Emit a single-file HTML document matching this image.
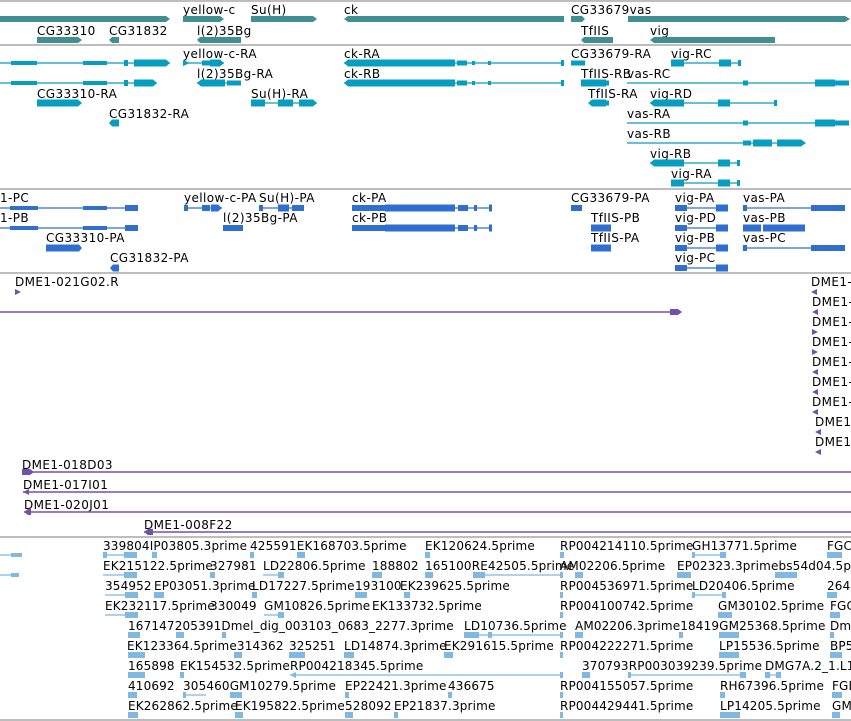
<!DOCTYPE html>
<html><head><meta charset="utf-8"><style>
html,body{margin:0;padding:0;background:#fff;}
svg{display:block;}
text{font-family:"DejaVu Sans","Liberation Sans",sans-serif;font-size:12px;fill:#000;letter-spacing:0.4px;}
.est text{letter-spacing:0.15px;}
.sep{stroke:#bdbdbd;stroke-width:2;}
.g{fill:#3f8f93;}
.t{fill:#069ec0;}
.tl{stroke:#069ec0;stroke-width:1.2;}
.p{fill:#2f6fd0;}
.pl{stroke:#2f6fd0;stroke-width:1.2;}
.u{fill:#7052ad;}
.ul{stroke:#7052ad;stroke-width:1.5;}
.b{fill:#7fb8e0;}
.bl{stroke:#7fb8e0;stroke-width:1.2;}
</style></head><body>
<svg width="851" height="721" viewBox="0 0 851 721" xmlns="http://www.w3.org/2000/svg">
<rect width="851" height="721" fill="#fff"/>
<line class="sep" x1="0" y1="1" x2="851" y2="1"/>
<line class="sep" x1="0" y1="45" x2="851" y2="45"/>
<line class="sep" x1="0" y1="189" x2="851" y2="189"/>
<line class="sep" x1="0" y1="273" x2="851" y2="273"/>
<line class="sep" x1="0" y1="537" x2="851" y2="537"/>
<line class="sep" x1="0" y1="720" x2="851" y2="720"/>

<!-- GENE TRACK -->
<polygon class="g" points="0,16 166,16 170,19 166,22 0,22"/>
<text x="183" y="14">yellow-c</text>
<polygon class="g" points="183,16 220,16 224,19 220,22 183,22"/>
<text x="251" y="14">Su(H)</text>
<polygon class="g" points="251,16 313,16 317,19 313,22 251,22"/>
<text x="344" y="14">ck</text>
<polygon class="g" points="348,16 564,16 564,22 348,22 344,19"/>
<text x="571" y="14">CG33679vas</text>
<polygon class="g" points="571,16 582,16 585,19 582,22 571,22"/>
<polygon class="g" points="628,16 845,16 850,19 845,22 628,22"/>
<text x="37" y="35">CG33310</text>
<polygon class="g" points="37,37 78,37 82,40 78,43 37,43"/>
<text x="109" y="35">CG31832</text>
<polygon class="g" points="112,37 119,37 119,43 112,43 109,40"/>
<text x="197" y="35">l(2)35Bg</text>
<polygon class="g" points="200,37 241,37 241,43 200,43 197,40"/>
<text x="581" y="35">TfIIS</text>
<polygon class="g" points="584,37 613,37 613,43 584,43 581,40"/>
<text x="650" y="35">vig</text>
<polygon class="g" points="654,37 775,37 775,43 654,43 650,40"/>

<!-- TRANSCRIPT TRACK -->
<g>
<line class="tl" x1="0" y1="63" x2="170" y2="63"/>
<rect class="t" x="11" y="61" width="26" height="4"/><rect class="t" x="83" y="61" width="24" height="4"/><rect class="t" x="124" y="60" width="4" height="6"/>
<polygon class="t" points="134,59.5 166,59.5 170,63 166,66.5 134,66.5"/>
<line class="tl" x1="0" y1="83" x2="157" y2="83"/>
<rect class="t" x="11" y="81" width="26" height="4"/><rect class="t" x="83" y="81" width="24" height="4"/><rect class="t" x="124" y="80" width="4" height="6"/>
<polygon class="t" points="134,79.5 153,79.5 157,83 153,86.5 134,86.5"/>
<text x="183" y="58">yellow-c-RA</text>
<line class="tl" x1="183" y1="63" x2="224" y2="63"/>
<polygon class="t" points="183,60 190,63 183,66"/><rect class="t" x="202" y="60.5" width="8" height="5"/>
<polygon class="t" points="210,59.5 220,59.5 224,63 220,66.5 210,66.5"/>
<text x="197" y="78">l(2)35Bg-RA</text>
<line class="tl" x1="197" y1="83" x2="241" y2="83"/>
<polygon class="t" points="201,79.5 225,79.5 225,86.5 201,86.5 197,83"/>
<rect class="t" x="227" y="80.5" width="14" height="5"/>
<text x="37" y="98">CG33310-RA</text>
<polygon class="t" points="37,99.5 78,99.5 82,103 78,106.5 37,106.5"/>
<text x="251" y="98">Su(H)-RA</text>
<line class="tl" x1="251" y1="103" x2="317" y2="103"/>
<rect class="t" x="251" y="99.5" width="14" height="7"/><rect class="t" x="278" y="99.5" width="15" height="7"/>
<polygon class="t" points="299,99.5 313,99.5 317,103 313,106.5 299,106.5"/>
<text x="109" y="118">CG31832-RA</text>
<polygon class="t" points="112,119.5 119,119.5 119,126.5 112,126.5 109,123"/>

<text x="344" y="58">ck-RA</text>
<line class="tl" x1="344" y1="63" x2="563" y2="63"/>
<polygon class="t" points="348,59.5 455,59.5 455,66.5 348,66.5 344,63"/>
<rect class="t" x="457" y="60.5" width="10" height="5"/><rect class="t" x="472" y="61" width="3" height="4"/><rect class="t" x="488" y="61" width="3" height="4"/><rect class="t" x="561" y="60" width="3" height="6"/>
<text x="344" y="78">ck-RB</text>
<line class="tl" x1="344" y1="83" x2="563" y2="83"/>
<polygon class="t" points="348,79.5 455,79.5 455,86.5 348,86.5 344,83"/>
<rect class="t" x="457" y="80.5" width="10" height="5"/><rect class="t" x="472" y="81" width="3" height="4"/><rect class="t" x="488" y="81" width="3" height="4"/><rect class="t" x="561" y="80" width="3" height="6"/>

<text x="571" y="58">CG33679-RA</text>
<rect class="t" x="571" y="60.5" width="14" height="5"/>
<text x="671" y="58">vig-RC</text>
<line class="tl" x1="671" y1="63" x2="741" y2="63"/>
<rect class="t" x="671" y="59.5" width="13" height="7"/><rect class="t" x="719" y="59.5" width="12" height="7"/><rect class="t" x="738" y="60" width="3" height="6"/>

<text x="581" y="78">TfIIS-RB</text>
<rect class="t" x="581" y="79.5" width="25" height="7"/><rect class="t" x="606" y="80.5" width="3" height="5"/>
<text x="627" y="78">vas-RC</text>
<line class="tl" x1="627" y1="83" x2="845" y2="83"/>
<rect class="t" x="743" y="80.5" width="5" height="5"/>
<rect class="t" x="815" y="79.5" width="20" height="7"/><rect class="t" x="835" y="80.5" width="14" height="5"/>

<text x="588" y="98">TfIIS-RA</text>
<polygon class="t" points="592,99.5 606,99.5 606,106.5 592,106.5 588,103"/><rect class="t" x="606" y="100.5" width="3" height="5"/>
<text x="650" y="98">vig-RD</text>
<line class="tl" x1="650" y1="103" x2="777" y2="103"/>
<polygon class="t" points="654,99.5 684,99.5 684,106.5 654,106.5 650,103"/><rect class="t" x="718" y="99.5" width="12" height="7"/><rect class="t" x="774" y="100" width="3" height="6"/>

<text x="627" y="118">vas-RA</text>
<line class="tl" x1="627" y1="123" x2="845" y2="123"/>
<rect class="t" x="743" y="120.5" width="5" height="5"/>
<rect class="t" x="815" y="119.5" width="20" height="7"/><rect class="t" x="835" y="120.5" width="14" height="5"/>

<text x="627" y="138">vas-RB</text>
<line class="tl" x1="627" y1="143" x2="805" y2="143"/>
<rect class="t" x="743" y="140.5" width="8" height="5"/><rect class="t" x="753" y="139.5" width="19" height="7"/>
<polygon class="t" points="777,139.5 801,139.5 806,143 801,146.5 777,146.5"/>

<text x="650" y="158">vig-RB</text>
<line class="tl" x1="650" y1="163" x2="740" y2="163"/>
<polygon class="t" points="654,159.5 684,159.5 684,166.5 654,166.5 650,163"/><rect class="t" x="718" y="159.5" width="12" height="7"/><rect class="t" x="737" y="160" width="3" height="6"/>
<text x="671" y="178">vig-RA</text>
<line class="tl" x1="671" y1="183" x2="740" y2="183"/>
<rect class="t" x="671" y="179.5" width="13" height="7"/><rect class="t" x="718" y="179.5" width="12" height="7"/><rect class="t" x="737" y="180" width="3" height="6"/>
</g>

<!-- PROTEIN TRACK -->
<g>
<text x="0" y="202">1-PC</text>
<line class="pl" x1="0" y1="208" x2="138" y2="208"/>
<rect class="p" x="10" y="206" width="28" height="4"/><rect class="p" x="83" y="206" width="24" height="4"/><rect class="p" x="125" y="205" width="13" height="6"/>
<text x="0" y="222">1-PB</text>
<line class="pl" x1="0" y1="228" x2="138" y2="228"/>
<rect class="p" x="10" y="226" width="28" height="4"/><rect class="p" x="83" y="226" width="24" height="4"/><rect class="p" x="125" y="225" width="13" height="6"/>
<text x="46" y="242">CG33310-PA</text>
<polygon class="p" points="46,244.5 79,244.5 82,248 79,251.5 46,251.5"/>
<text x="110" y="262">CG31832-PA</text>
<polygon class="p" points="113,264.5 119,264.5 119,271.5 113,271.5 110,268"/>
<text x="184" y="202">yellow-c-PA</text>
<line class="pl" x1="184" y1="208" x2="222" y2="208"/>
<rect class="p" x="184" y="205" width="4" height="6"/><rect class="p" x="202" y="205" width="8" height="6"/><polygon class="p" points="211,204.5 218,204.5 222,208 218,211.5 211,211.5"/>
<text x="259" y="202">Su(H)-PA</text>
<line class="pl" x1="259" y1="208" x2="304" y2="208"/>
<rect class="p" x="259" y="205" width="4" height="6"/><rect class="p" x="278" y="204.5" width="11" height="7"/><rect class="p" x="292" y="205" width="12" height="6"/>
<text x="223" y="222">l(2)35Bg-PA</text>
<rect class="p" x="223" y="225" width="20" height="6"/>
<text x="352" y="202">ck-PA</text>
<line class="pl" x1="352" y1="208" x2="492" y2="208"/>
<rect class="p" x="352" y="205" width="100" height="6"/><rect class="p" x="385" y="204.5" width="70" height="7"/><rect class="p" x="458" y="205" width="10" height="6"/><rect class="p" x="474" y="205" width="3" height="6"/><rect class="p" x="489" y="204.5" width="3" height="7"/>
<text x="352" y="222">ck-PB</text>
<line class="pl" x1="352" y1="228" x2="492" y2="228"/>
<rect class="p" x="352" y="225" width="100" height="6"/><rect class="p" x="385" y="224.5" width="70" height="7"/><rect class="p" x="458" y="225" width="10" height="6"/><rect class="p" x="474" y="225" width="3" height="6"/><rect class="p" x="489" y="224.5" width="3" height="7"/>
<text x="571" y="202">CG33679-PA</text>
<rect class="p" x="571" y="205" width="11" height="6"/>
<text x="591" y="222">TfIIS-PB</text>
<rect class="p" x="591" y="224.5" width="20" height="7"/>
<text x="591" y="242">TfIIS-PA</text>
<rect class="p" x="591" y="244.5" width="20" height="7"/>
<text x="675" y="202">vig-PA</text><line class="pl" x1="675" y1="208" x2="728" y2="208"/><rect class="p" x="675" y="205" width="12" height="6"/><rect class="p" x="716" y="204.5" width="12" height="7"/>
<text x="675" y="222">vig-PD</text><line class="pl" x1="675" y1="228" x2="728" y2="228"/><rect class="p" x="675" y="225" width="12" height="6"/><rect class="p" x="716" y="224.5" width="12" height="7"/>
<text x="675" y="242">vig-PB</text><line class="pl" x1="675" y1="248" x2="728" y2="248"/><rect class="p" x="675" y="245" width="12" height="6"/><rect class="p" x="716" y="244.5" width="12" height="7"/>
<text x="675" y="262">vig-PC</text><line class="pl" x1="675" y1="268" x2="728" y2="268"/><rect class="p" x="675" y="265" width="12" height="6"/><rect class="p" x="716" y="264.5" width="12" height="7"/>
<text x="743" y="202">vas-PA</text><line class="pl" x1="743" y1="208" x2="845" y2="208"/><rect class="p" x="743" y="205" width="4" height="6"/><rect class="p" x="811" y="205" width="34" height="6"/>
<text x="743" y="222">vas-PB</text><rect class="p" x="743" y="224.5" width="18" height="7"/><rect class="p" x="763" y="224.5" width="42" height="7"/>
<text x="743" y="242">vas-PC</text><line class="pl" x1="743" y1="248" x2="845" y2="248"/><rect class="p" x="743" y="245" width="4" height="6"/><rect class="p" x="811" y="245" width="34" height="6"/>
</g>

<!-- CLONE TRACK -->
<g>
<text x="15" y="286">DME1-021G02.R</text>
<polygon class="u" points="15,289 21,292 15,295"/>
<line class="ul" x1="0" y1="312" x2="672" y2="312"/>
<polygon class="u" points="670,309 678,309 682,312 678,315 670,315"/>
<text x="811" y="286">DME1-</text><polygon class="u" points="817,289 811,292 817,295"/>
<text x="812" y="306">DME1-</text><polygon class="u" points="818,309 812,312 818,315"/>
<text x="812" y="326">DME1-</text><polygon class="u" points="812,329 818,332 812,335"/>
<text x="812" y="346">DME1-</text><polygon class="u" points="812,349 818,352 812,355"/>
<text x="812" y="366">DME1-</text><polygon class="u" points="818,369 812,372 818,375"/>
<text x="812" y="386">DME1-</text><polygon class="u" points="818,389 812,392 818,395"/>
<text x="812" y="406">DME1-</text><polygon class="u" points="818,409 812,412 818,415"/>
<text x="815" y="426">DME1-</text><polygon class="u" points="821,429 815,432 821,435"/>
<text x="815" y="446">DME1-</text><polygon class="u" points="821,449 815,452 821,455"/>
<text x="22" y="469">DME1-018D03</text>
<line class="ul" x1="22" y1="472" x2="851" y2="472"/><polygon class="u" points="22,469 30,469 34,472 30,475 22,475"/>
<text x="23" y="489">DME1-017I01</text>
<line class="ul" x1="23" y1="492" x2="851" y2="492"/><polygon class="u" points="29,489 23,492 29,495"/>
<text x="24" y="509">DME1-020J01</text>
<line class="ul" x1="24" y1="512" x2="851" y2="512"/><polygon class="u" points="28,509 31,509 31,515 28,515 24,512"/>
<text x="144" y="529">DME1-008F22</text>
<line class="ul" x1="144" y1="532" x2="851" y2="532"/><polygon class="u" points="148,529 153,529 153,535 148,535 144,532"/>
</g>

<!-- EST TRACK -->
<g class="est">
<line class="bl" x1="0" y1="555" x2="22" y2="555"/><rect class="b" x="11" y="553" width="11" height="4"/>
<line class="bl" x1="0" y1="575" x2="18" y2="575"/><rect class="b" x="11" y="573" width="8" height="4"/>

<text x="103" y="550">339804IP03805.3prime</text>
<text x="250" y="550">425591EK168703.5prime</text>
<text x="425" y="550">EK120624.5prime</text>
<text x="560" y="550">RP004214110.5prime</text>
<text x="692" y="550">GH13771.5prime</text>
<text x="827" y="550">FGC</text>
<line class="bl" x1="103" y1="555" x2="137" y2="555"/><rect class="b" x="103" y="552" width="4" height="6"/><rect class="b" x="124" y="552" width="13" height="6"/>
<rect class="b" x="152" y="552" width="5" height="6"/><rect class="b" x="250" y="552" width="4" height="6"/><rect class="b" x="297" y="552" width="8" height="6"/><rect class="b" x="425" y="552" width="5" height="6"/><rect class="b" x="560" y="552" width="4" height="6"/>
<line class="bl" x1="692" y1="555" x2="725" y2="555"/><rect class="b" x="692" y="552" width="3" height="6"/><rect class="b" x="720" y="552" width="6" height="6"/><rect class="b" x="827" y="552" width="15" height="6"/>

<text x="103" y="570">EK215122.5prime</text>
<text x="210" y="570">327981</text>
<text x="263" y="570">LD22806.5prime</text>
<text x="372" y="570">188802</text>
<text x="425" y="570">165100RE42505.5prime</text>
<text x="560" y="570">AM02206.5prime</text>
<text x="677" y="570">EP02323.3primebs54d04.5prime</text>
<line class="bl" x1="103" y1="575" x2="137" y2="575"/><rect class="b" x="124" y="572" width="13" height="6"/>
<rect class="b" x="210" y="572" width="5" height="6"/><line class="bl" x1="263" y1="575" x2="283" y2="575"/><rect class="b" x="278" y="572" width="6" height="6"/>
<rect class="b" x="372" y="572" width="10" height="6"/><rect class="b" x="425" y="572" width="8" height="6"/>
<line class="bl" x1="473" y1="575" x2="563" y2="575"/><rect class="b" x="473" y="572" width="12" height="6"/><rect class="b" x="560" y="572" width="3" height="6"/>
<rect class="b" x="575" y="572" width="8" height="6"/><rect class="b" x="677" y="572" width="14" height="6"/><rect class="b" x="775" y="572" width="22" height="6"/>

<text x="105" y="590">354952</text>
<text x="154" y="590">EP03051.3prime</text>
<text x="252" y="590">LD17227.5prime</text>
<text x="355" y="590">193100</text>
<text x="400" y="590">EK239625.5prime</text>
<text x="560" y="590">RP004536971.5prime</text>
<text x="692" y="590">LD20406.5prime</text>
<text x="827" y="590">264</text>
<line class="bl" x1="105" y1="595" x2="138" y2="595"/><rect class="b" x="125" y="592" width="13" height="6"/>
<rect class="b" x="154" y="592" width="10" height="6"/><rect class="b" x="252" y="592" width="5" height="6"/><rect class="b" x="355" y="592" width="12" height="6"/><rect class="b" x="404" y="592" width="6" height="6"/><rect class="b" x="560" y="592" width="3" height="6"/>
<line class="bl" x1="692" y1="595" x2="725" y2="595"/><rect class="b" x="692" y="592" width="3" height="6"/><rect class="b" x="722" y="592" width="4" height="6"/><rect class="b" x="827" y="592" width="10" height="6"/>

<text x="105" y="610">EK232117.5prime</text>
<text x="210" y="610">330049</text>
<text x="264" y="610">GM10826.5prime</text>
<text x="372" y="610">EK133732.5prime</text>
<text x="560" y="610">RP004100742.5prime</text>
<text x="718" y="610">GM30102.5prime</text>
<text x="830" y="610">FGC</text>
<line class="bl" x1="105" y1="615" x2="138" y2="615"/><rect class="b" x="125" y="612" width="13" height="6"/>
<line class="bl" x1="264" y1="615" x2="284" y2="615"/><rect class="b" x="278" y="612" width="6" height="6"/>
<rect class="b" x="560" y="612" width="3" height="6"/><rect class="b" x="718" y="612" width="14" height="6"/><rect class="b" x="830" y="612" width="10" height="6"/>

<text x="128" y="630">167147205391Dmel_dig_003103_0683_2277.3prime</text>
<text x="464" y="630">LD10736.5prime</text>
<text x="575" y="630">AM02206.3prime18419GM25368.5prime</text>
<text x="830" y="630">Dm</text>
<rect class="b" x="128" y="632" width="12" height="6"/><rect class="b" x="176" y="632" width="8" height="6"/><rect class="b" x="222" y="632" width="4" height="6"/>
<line class="bl" x1="464" y1="635" x2="563" y2="635"/><rect class="b" x="464" y="632" width="15" height="6"/><rect class="b" x="488" y="632" width="4" height="6"/><rect class="b" x="560" y="632" width="3" height="6"/>
<rect class="b" x="575" y="632" width="8" height="6"/><rect class="b" x="679" y="632" width="4" height="6"/><rect class="b" x="719" y="632" width="20" height="6"/><rect class="b" x="830" y="632" width="4" height="6"/>

<text x="127" y="650">EK123364.5prime314362</text>
<text x="289" y="650">325251</text>
<text x="344" y="650">LD14874.3prime</text>
<text x="444" y="650">EK291615.5prime</text>
<text x="560" y="650">RP004222271.5prime</text>
<text x="719" y="650">LP15536.5prime</text>
<text x="830" y="650">BP5</text>
<rect class="b" x="128" y="652" width="17" height="6"/><rect class="b" x="234" y="652" width="8" height="6"/><rect class="b" x="289" y="652" width="16" height="6"/><rect class="b" x="344" y="652" width="10" height="6"/><rect class="b" x="444" y="652" width="9" height="6"/><rect class="b" x="560" y="652" width="3" height="6"/><rect class="b" x="719" y="652" width="20" height="6"/><rect class="b" x="830" y="652" width="12" height="6"/>

<text x="128" y="670">165898</text>
<text x="180" y="670">EK154532.5prime</text>
<text x="290" y="670">RP004218345.5prime</text>
<text x="582" y="670">370793RP003039239.5prime</text>
<text x="765" y="670">DMG7A.2_1.L1</text>
<rect class="b" x="128" y="672" width="17" height="6"/><rect class="b" x="180" y="672" width="4" height="6"/>
<line class="bl" x1="290" y1="675" x2="563" y2="675"/><polygon class="b" points="290,675 296,672 296,678"/><rect class="b" x="560" y="672" width="3" height="6"/>
<rect class="b" x="582" y="672" width="8" height="6"/>
<line class="bl" x1="628" y1="675" x2="746" y2="675"/><rect class="b" x="628" y="672" width="3" height="6"/><rect class="b" x="740" y="672" width="6" height="6"/>
<line class="bl" x1="765" y1="675" x2="781" y2="675"/><rect class="b" x="765" y="672" width="5" height="6"/><rect class="b" x="776" y="672" width="5" height="6"/>

<text x="128" y="690">410692</text>
<text x="183" y="690">305460GM10279.5prime</text>
<text x="345" y="690">EP22421.3prime</text>
<text x="448" y="690">436675</text>
<text x="560" y="690">RP004155057.5prime</text>
<text x="720" y="690">RH67396.5prime</text>
<text x="832" y="690">FGE</text>
<line class="bl" x1="183" y1="695" x2="206" y2="695"/><rect class="b" x="128" y="692" width="9" height="6"/><rect class="b" x="183" y="692" width="3" height="6"/><rect class="b" x="230" y="692" width="12" height="6"/><rect class="b" x="345" y="692" width="4" height="6"/><rect class="b" x="448" y="692" width="4" height="6"/><rect class="b" x="560" y="692" width="3" height="6"/><rect class="b" x="720" y="692" width="5" height="6"/><rect class="b" x="832" y="692" width="10" height="6"/>

<text x="128" y="710">EK262862.5prime</text>
<text x="235" y="710">EK195822.5prime</text>
<text x="345" y="710">528092</text>
<text x="394" y="710">EP21837.3prime</text>
<text x="560" y="710">RP004429441.5prime</text>
<text x="720" y="710">LP14205.5prime</text>
<text x="832" y="710">GM</text>
<rect class="b" x="128" y="712" width="10" height="6"/><rect class="b" x="235" y="712" width="8" height="6"/><rect class="b" x="345" y="712" width="8" height="6"/><rect class="b" x="394" y="712" width="4" height="6"/><rect class="b" x="560" y="712" width="3" height="6"/><rect class="b" x="720" y="712" width="20" height="6"/><rect class="b" x="832" y="712" width="8" height="6"/>
</g>
</svg>
</body></html>
